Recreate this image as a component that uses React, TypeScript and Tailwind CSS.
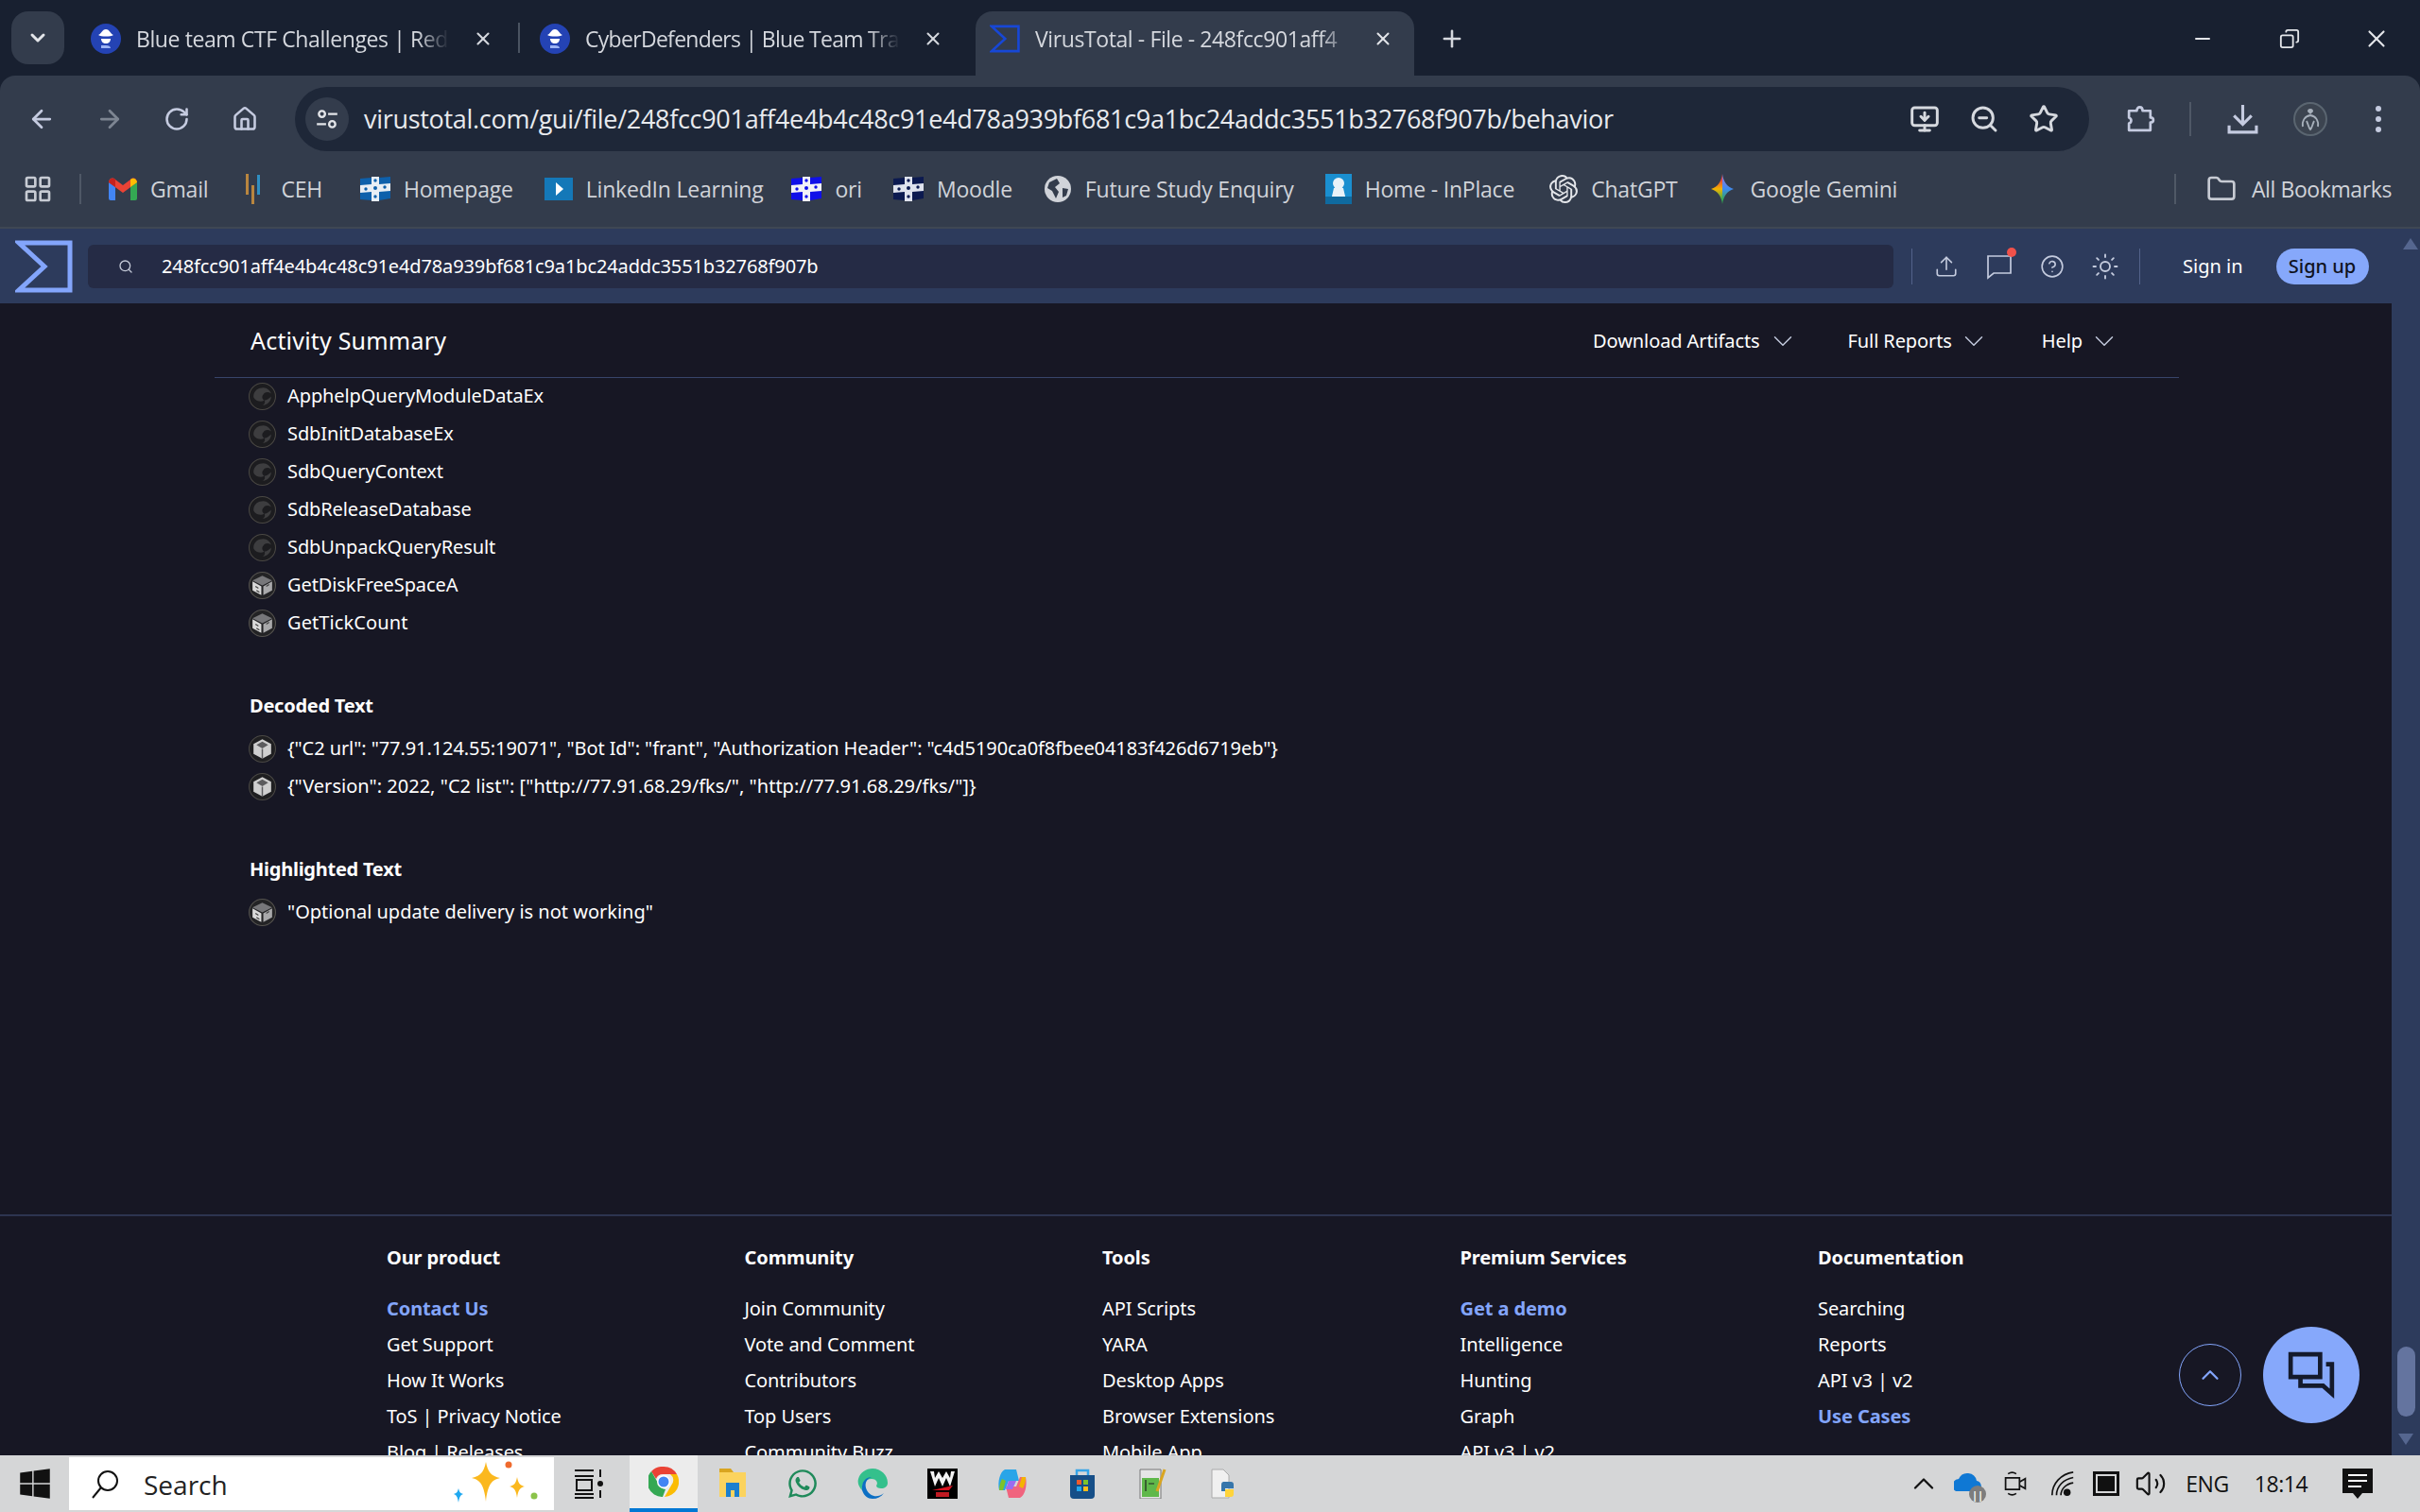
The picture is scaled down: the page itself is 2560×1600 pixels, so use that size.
import {
  ArrowLeft,
  ArrowRight,
  ChevronDown,
  ChevronUp,
  CircleHelp,
  Copy,
  Folder,
  House,
  LayoutGrid,
  Minus,
  MonitorDown,
  Plus,
  RotateCw,
  Search,
  Star,
  Sun,
  Upload,
  Volume2,
  X,
  ZoomOut,
} from "lucide-react";
import { FaWhatsapp, FaWindows } from "react-icons/fa";
import { SiOpenai } from "react-icons/si";

const UI = "font-['Open_Sans',sans-serif]";
const SITE = "font-['Noto_Sans',sans-serif]";

function HatIcon() {
  return (
    <svg viewBox="0 0 32 32" className="w-8 h-8 shrink-0">
      <circle cx="16" cy="16" r="16" fill="#2443b4" />
      <path d="M8 12c3-1 4-6 8-6s5 5 8 6c-3 2-13 2-16 0z" fill="#fff" />
      <path d="M11 16h10c0 3-2 5-5 5s-5-2-5-5z" fill="#fff" />
      <path d="M11 23h5c3 0 5 1 5 3h-10z" fill="#9db4f5" />
    </svg>
  );
}

function SigmaIcon({ stroke, className }: { stroke: string; className: string }) {
  return (
    <svg viewBox="0 0 61 56" className={className}>
      <polygon points="4,3 58,3 58,53 4,53 31,28" fill="none" stroke={stroke} strokeWidth="5" />
    </svg>
  );
}

function Tab({ title, active, icon, textW }: { title: string; active?: boolean; icon: React.ReactNode; textW: string }) {
  return (
    <div className={`flex items-center h-[68px] pb-[10px] pl-[15px] ${active ? "bg-[#333c4c] rounded-tl-[18px]" : ""}`}>
      {icon}
      <span
        className={`ml-[16px] overflow-hidden whitespace-nowrap text-[23px] text-[#d5d8de] [mask-image:linear-gradient(to_right,black_90%,transparent)] ${textW}`}
      >
        {title}
      </span>
    </div>
  );
}

function TabStrip() {
  return (
    <div className={`h-[80px] shrink-0 flex items-end bg-[#182030] ${UI}`}>
      <div className="w-[12px]" />
      <div className="self-start mt-[12px] w-[56px] h-[56px] rounded-[18px] bg-[#333c4c] flex items-center justify-center text-[#e3e5e9]">
        <ChevronDown size={24} strokeWidth={3} />
      </div>
      <div className="w-[13px]" />
      <Tab title="Blue team CTF Challenges | Red" icon={<HatIcon />} textW="w-[331px] tracking-[-0.4px]" />
      <div className="w-[72px] h-[68px] pb-[10px] flex items-center justify-center text-[#d5d8de]">
        <X size={22} strokeWidth={2.2} />
      </div>
      <div className="self-start ml-[1px] mt-[24px] h-[32px] w-[2px] bg-[#4a5361]" />
      <div className="w-[6px]" />
      <Tab title="CyberDefenders | Blue Team Tra" icon={<HatIcon />} textW="w-[333px] tracking-[-0.7px]" />
      <div className="w-[70px] h-[68px] pb-[10px] flex items-center justify-center text-[#d5d8de]">
        <X size={22} strokeWidth={2.2} />
      </div>
      <div className="w-[10px]" />
      <Tab
        title="VirusTotal - File - 248fcc901aff4"
        active
        icon={<SigmaIcon stroke="#1747d6" className="w-[32px] h-[32px] shrink-0" />}
        textW="w-[335px] tracking-[-0.4px]"
      />
      <div className="w-[66px] h-[68px] pb-[10px] bg-[#333c4c] rounded-tr-[18px] flex items-center justify-center text-[#e3e5e9]">
        <X size={22} strokeWidth={2.2} />
      </div>
      <div className="w-[40px] h-[68px] pb-[10px] ml-[20px] flex items-center justify-center text-[#d5d8de]">
        <Plus size={28} strokeWidth={2.2} />
      </div>
      <div className="ml-auto self-stretch flex items-center text-[#e3e5e9] pt-[2px]">
        <div className="w-[92px] flex justify-center">
          <Minus size={24} strokeWidth={2} />
        </div>
        <div className="w-[92px] flex justify-center">
          <Copy size={22} strokeWidth={2} className="-scale-x-100" />
        </div>
        <div className="w-[92px] flex justify-center">
          <X size={30} strokeWidth={1.7} />
        </div>
      </div>
    </div>
  );
}

function Toolbar() {
  return (
    <div className={`h-[80px] shrink-0 bg-[#182030] ${UI}`}>
      <div className="h-full bg-[#333c4c] rounded-t-[16px] flex items-end text-[#c5cbe0]">
        <div className="h-[68px] flex items-center">
          <div className="w-[8px]" />
          <div className="w-[72px] flex justify-center">
            <ArrowLeft size={30} strokeWidth={2.2} />
          </div>
          <div className="w-[71px] flex justify-center text-[#7d8592]">
            <ArrowRight size={30} strokeWidth={2.2} />
          </div>
          <div className="w-[72px] flex justify-center">
            <RotateCw size={28} strokeWidth={2.2} />
          </div>
          <div className="w-[72px] flex justify-center">
            <House size={28} strokeWidth={2.2} />
          </div>
          <div className="w-[17px]" />
        </div>
        <div className="w-[1898px] h-[68px] rounded-full bg-[#1e2738] flex items-center">
          <div className="ml-[11px] w-[46px] h-[46px] rounded-full bg-[#333c4c] flex items-center justify-center">
            <svg viewBox="0 0 24 24" className="w-[26px] h-[26px]" fill="none" stroke="#e3e5e9" strokeWidth="2.2">
              <circle cx="7" cy="7" r="3" />
              <path d="M13 7h9M2 17h9" />
              <circle cx="17" cy="17" r="3" />
            </svg>
          </div>
          <span className="ml-[16px] text-[27px] tracking-[-0.3px] text-[#e8eaee] whitespace-nowrap">
            virustotal.com/gui/file/248fcc901aff4e4b4c48c91e4d78a939bf681c9a1bc24addc3551b32768f907b/behavior
          </span>
          <div className="ml-auto flex items-center gap-[31px] pr-[32px] text-[#d6d9df]">
            <MonitorDown size={32} strokeWidth={2.2} />
            <ZoomOut size={32} strokeWidth={2.2} />
            <Star size={32} strokeWidth={2.2} />
          </div>
        </div>
        <div className="h-[68px] flex items-center ml-[5px]">
          <div className="w-[101px] flex justify-center pl-[4px] pr-[7px]">
            <svg viewBox="0 0 32 32" className="w-[33px] h-[33px]" fill="none" stroke="currentColor" strokeWidth="2.6" strokeLinejoin="round">
              <path d="M4 7h8c0-5 6-5 6 0h8v7c4 0 4 5 0 5v8H4v-7c3-1 3-5 0-6z" />
            </svg>
          </div>
          <div className="h-[36px] w-[2px] bg-[#4f5866]" />
          <div className="w-[108px] flex justify-center">
            <svg viewBox="0 0 32 32" className="w-[33px] h-[33px]" fill="none" stroke="currentColor" strokeWidth="3">
              <path d="M16 1v19M7 12l9 9 9-9M2 22v7h28v-7" />
            </svg>
          </div>
          <svg viewBox="0 0 36 36" className="w-[36px] h-[36px]">
            <circle cx="18" cy="18" r="17" fill="#3c4450" stroke="#5a6570" strokeWidth="2" />
            <path d="M18 7c-2 0-3 1-3 3l3 3 3-3c0-2-1-3-3-3z" fill="#a7b0bb" />
            <path d="M18 14c-6 1-9 6-8 12M18 14c6 1 9 6 8 12M14 20c2 4 2 7 4 9 2-2 2-5 4-9" fill="none" stroke="#a7b0bb" strokeWidth="1.8" />
          </svg>
          <div className="w-[88px] pl-[20px] flex flex-col items-center gap-[5px]">
            <div className="w-[6px] h-[6px] rounded-full bg-[#c5cbe0]" />
            <div className="w-[6px] h-[6px] rounded-full bg-[#c5cbe0]" />
            <div className="w-[6px] h-[6px] rounded-full bg-[#c5cbe0]" />
          </div>
        </div>
      </div>
    </div>
  );
}

function FlagIcon({ bg, dot }: { bg: string; dot: string }) {
  return (
    <svg viewBox="0 0 32 28" className="w-[32px] h-[28px] shrink-0">
      <path d="M0 3l12-1v24L0 25zM20 2l12-1v23l-12 2z" fill={bg} />
      <path d="M12 1h8v26h-8z" fill={bg} />
      <path d="M0 10l12-1V1h8v8l12-1v8l-12 1v10h-8V17L0 18z" fill={dot} />
      <circle cx="16" cy="5" r="1.7" fill={bg} />
      <circle cx="16" cy="13" r="2" fill={bg} />
      <circle cx="16" cy="22" r="1.7" fill={bg} />
      <circle cx="6" cy="14" r="1.7" fill={bg} />
      <circle cx="26" cy="12" r="1.7" fill={bg} />
    </svg>
  );
}

function Bookmark({ icon, label, className = "" }: { icon: React.ReactNode; label: string; className?: string }) {
  return (
    <div className={`flex items-center gap-[14px] ${className}`}>
      {icon}
      <span className="text-[23px] tracking-[-0.2px] text-[#d0d3d9] whitespace-nowrap">{label}</span>
    </div>
  );
}

function BookmarksBar() {
  return (
    <div className={`h-[82px] shrink-0 bg-[#333c4c] border-b-2 border-[#3f4754] flex items-center ${UI}`}>
      <div className="w-[84px] flex justify-center pr-[4px] text-[#c7cbd3]">
        <LayoutGrid size={32} strokeWidth={2} />
      </div>
      <div className="h-[32px] w-[2px] bg-[#4f5866]" />
      <div className="ml-[29px] flex items-center gap-[33px]">
        <Bookmark
          label="Gmail"
          icon={
            <svg viewBox="0 0 30 24" className="w-[30px] h-[24px]">
              <path d="M0 5c0-4 4-6 7-3l8 6 8-6c3-3 7-1 7 3L15 16z" fill="#ea4335" />
              <path d="M0 5l7 5v14H2a2 2 0 0 1-2-2z" fill="#4285f4" />
              <path d="M30 5l-7 5v14h5a2 2 0 0 0 2-2z" fill="#34a853" />
              <path d="M23 2v8l7-5c0-3-4-6-7-3z" fill="#fbbc04" />
              <path d="M7 2v8L0 5c0-3 4-6 7-3z" fill="#c5221f" />
            </svg>
          }
        />
        <Bookmark
          label="CEH"
          icon={
            <svg viewBox="0 0 30 32" className="w-[30px] h-[32px]">
              <path d="M7 0h3v22H7zM13 12h3v20h-3z" fill="#b9863f" />
              <path d="M19 1h3v21h-3z" fill="#2f8fc2" />
            </svg>
          }
        />
        <Bookmark label="Homepage" className="ml-[7px]" icon={<FlagIcon bg="#0e60ab" dot="#e8eef5" />} />
        <Bookmark
          label="LinkedIn Learning"
          icon={
            <svg viewBox="0 0 30 28" className="w-[30px] h-[28px]">
              <path d="M0 2h30v24H0z" fill="#1478b8" />
              <path d="M12 7l8 7-8 7z" fill="#fff" />
            </svg>
          }
        />
        <Bookmark label="ori" className="-ml-[3px]" icon={<FlagIcon bg="#1010e8" dot="#f2f2f8" />} />
        <Bookmark label="Moodle" icon={<FlagIcon bg="#0c1a50" dot="#dfe3ee" />} />
        <Bookmark
          label="Future Study Enquiry"
          icon={
            <svg viewBox="0 0 30 30" className="w-[30px] h-[30px]">
              <circle cx="15" cy="15" r="14" fill="#d0d3d9" />
              <path d="M6 8l8-4 3 5-5 4 4 5-3 7-4-8-5-3zM20 14l6 1-2 7-4 2z" fill="#333c4c" />
            </svg>
          }
        />
        <Bookmark
          label="Home - InPlace"
          icon={
            <svg viewBox="0 0 28 32" className="w-[28px] h-[32px]">
              <path d="M0 0h28v32H0z" fill="#1a8fd0" />
              <circle cx="14" cy="10" r="6" fill="#e8f2f8" />
              <path d="M9 15h10l3 13H6z" fill="#e8f2f8" />
              <path d="M0 24h28v8H0z" fill="#0f6a9f" />
            </svg>
          }
        />
        <Bookmark label="ChatGPT" className="ml-[4px]" icon={<SiOpenai size={30} className="text-[#e3e5e9]" />} />
        <Bookmark
          label="Google Gemini"
          className="-ml-[2px]"
          icon={
            <svg viewBox="0 0 32 32" className="w-[32px] h-[32px]">
              <defs>
                <linearGradient id="gemL" x1="0" y1="0" x2="0" y2="1">
                  <stop offset="0.2" stopColor="#e8453c" />
                  <stop offset="0.5" stopColor="#f4b400" />
                  <stop offset="0.85" stopColor="#34a853" />
                </linearGradient>
                <linearGradient id="gemR" x1="0" y1="0" x2="0" y2="1">
                  <stop offset="0.2" stopColor="#7a7fe0" />
                  <stop offset="0.5" stopColor="#3f8af0" />
                  <stop offset="0.85" stopColor="#34a853" />
                </linearGradient>
              </defs>
              <path d="M16 0c-1 8-5 14-12 16 7 2 11 8 12 16z" fill="url(#gemL)" />
              <path d="M16 0c1 8 5 14 12 16-7 2-11 8-12 16z" fill="url(#gemR)" />
            </svg>
          }
        />
      </div>
      <div className="ml-auto flex items-center">
        <div className="h-[32px] w-[2px] bg-[#4f5866]" />
        <div className="ml-[32px] flex items-center gap-[16px] pr-[30px]">
          <Folder size={32} strokeWidth={2} className="text-[#c7cbd3]" />
          <span className="text-[23px] tracking-[-0.4px] text-[#d0d3d9] whitespace-nowrap">All Bookmarks</span>
        </div>
      </div>
    </div>
  );
}

function VtHeader() {
  return (
    <div className="h-[79px] shrink-0 bg-[#2d3b5c] flex items-center">
      <SigmaIcon stroke="#83a5fb" className="ml-[16px] w-[61px] h-[56px] shrink-0" />
      <div className="ml-[16px] w-[1910px] h-[46px] rounded-[6px] bg-[#252b45] flex items-center">
        <Search size={16} className="ml-[32px] text-[#c5cad8]" />
        <span className="ml-[30px] text-[20px] tracking-[-0.12px] text-white whitespace-nowrap">
          248fcc901aff4e4b4c48c91e4d78a939bf681c9a1bc24addc3551b32768f907b
        </span>
      </div>
      <div className="ml-[19px] h-[38px] w-px bg-[#53628a]" />
      <div className="flex items-center text-[#c4cbde]">
        <div className="w-[72px] flex justify-center">
          <Upload size={26} strokeWidth={1.5} />
        </div>
        <div className="relative w-[40px] flex justify-center">
          <svg viewBox="0 0 28 28" className="w-[28px] h-[28px]" fill="none" stroke="currentColor" strokeWidth="1.7">
            <path d="M2 3h24v18H8l-6 5z" />
          </svg>
          <span className="absolute -top-[6px] right-[2px] w-[10px] h-[10px] rounded-full bg-[#f1514a]" />
        </div>
        <div className="w-[72px] flex justify-center">
          <CircleHelp size={26} strokeWidth={1.5} />
        </div>
        <div className="w-[40px] flex justify-center">
          <Sun size={30} strokeWidth={1.5} />
        </div>
      </div>
      <div className="ml-[16px] h-[38px] w-px bg-[#53628a]" />
      <span className="ml-[45px] text-[20px] text-white">Sign in</span>
      <span className="ml-[35px] w-[98px] h-[38px] rounded-[19px] bg-[#86a8fb] text-[#10131f] text-[20px] font-medium flex items-center justify-center">
        Sign up
      </span>
    </div>
  );
}

function SwirlIcon() {
  return (
    <svg viewBox="0 0 28 28" className="w-[29px] h-[29px] shrink-0">
      <circle cx="14" cy="14" r="13.5" fill="#1c1c1f" stroke="#4a4844" />
      <path d="M5 14c0-6 5-9 10-9 4 0 7 3 8 6-3-2-6-2-8 1-2 2-1 5 1 6-5 3-11-1-11-4z" fill="#3d3d3f" />
      <path d="M23 14c0 5-4 9-9 9 3-1 3-4 2-5 3 0 5-2 7-4z" fill="#3d3d3f" />
    </svg>
  );
}

function CubeIcon() {
  return (
    <svg viewBox="0 0 28 28" className="w-[29px] h-[29px] shrink-0">
      <circle cx="14" cy="14" r="13.5" fill="#232325" stroke="#55534f" />
      <path d="M14 4l10 5-10 5L4 9z" fill="#77777a" />
      <path d="M4 10l9 5v9l-9-5z" fill="#d9d9d9" />
      <path d="M15 15l9-5v9l-9 5z" fill="#a9a9ab" />
      <path d="M7 15l3 2M8 19l3 2M18 15l3-2" stroke="#444" strokeWidth="1.2" />
    </svg>
  );
}

function BoxIcon() {
  return (
    <svg viewBox="0 0 28 28" className="w-[29px] h-[29px] shrink-0">
      <circle cx="14" cy="14" r="13.5" fill="#1f1f21" stroke="#4a4845" />
      <path d="M14 4l9 5v10l-9 5-9-5V9z" fill="#cfcfcf" />
      <path d="M14 6.5l6 3.5-6 3.5L8 10z" fill="#5c5c5e" />
      <path d="M14 14v10" stroke="#5c5c5e" strokeWidth="1.4" />
    </svg>
  );
}

function ApiRow({ icon, text, track = "tracking-[-0.1px]" }: { icon: React.ReactNode; text: string; track?: string }) {
  return (
    <div className={`h-[40px] flex items-center gap-[12px] text-[20px] text-white whitespace-nowrap ${track}`}>
      {icon}
      {text}
    </div>
  );
}

function Activity() {
  const swirl = ["ApphelpQueryModuleDataEx", "SdbInitDatabaseEx", "SdbQueryContext", "SdbReleaseDatabase", "SdbUnpackQueryResult"];
  return (
    <div>
      <div className="ml-[227px] mr-[225px] h-[79px] pt-[2px] border-b border-[#38456a] flex items-center pl-[38px] text-white">
        <span className="text-[25px] tracking-[0.2px]">Activity Summary</span>
        <div className="ml-auto flex items-center text-[20px] tracking-[-0.1px] pr-[62px]">
          <span>Download Artifacts</span>
          <ChevronDown size={34} strokeWidth={1} className="ml-[7px] text-[#c4cbde]" />
          <span className="ml-[52px]">Full Reports</span>
          <ChevronDown size={34} strokeWidth={1} className="ml-[6px] text-[#c4cbde]" />
          <span className="ml-[55px]">Help</span>
          <ChevronDown size={34} strokeWidth={1} className="ml-[6px] text-[#c4cbde]" />
        </div>
      </div>
      <div className="-mt-[1px] pl-[263px]">
        {swirl.map((s) => (
          <ApiRow key={s} icon={<SwirlIcon />} text={s} />
        ))}
        <ApiRow icon={<CubeIcon />} text="GetDiskFreeSpaceA" />
        <ApiRow icon={<CubeIcon />} track="tracking-[0.1px]" text="GetTickCount" />
        <h3 className="mt-[54px] h-[28px] ml-[1px] flex items-center font-bold text-[20px] tracking-[-0.25px] text-white">Decoded Text</h3>
        <div className="mt-[11px]">
          <ApiRow
            icon={<BoxIcon />}
            track="tracking-[-0.08px]"
            text={'{"C2 url": "77.91.124.55:19071", "Bot Id": "frant", "Authorization Header": "c4d5190ca0f8fbee04183f426d6719eb"}'}
          />
          <ApiRow
            icon={<BoxIcon />}
            track="tracking-[0.02px]"
            text={'{"Version": 2022, "C2 list": ["http://77.91.68.29/fks/", "http://77.91.68.29/fks/"]}'}
          />
        </div>
        <h3 className="mt-[54px] h-[28px] ml-[1px] flex items-center font-bold text-[20px] tracking-[-0.25px] text-white">Highlighted Text</h3>
        <div className="mt-[11px]">
          <ApiRow icon={<CubeIcon />} track="tracking-[0px]" text={'"Optional update delivery is not working"'} />
        </div>
      </div>
    </div>
  );
}

const footerCols: { title: string; links: { label: string; blue?: boolean }[] }[] = [
  {
    title: "Our product",
    links: [{ label: "Contact Us", blue: true }, { label: "Get Support" }, { label: "How It Works" }, { label: "ToS | Privacy Notice" }, { label: "Blog | Releases" }],
  },
  {
    title: "Community",
    links: [{ label: "Join Community" }, { label: "Vote and Comment" }, { label: "Contributors" }, { label: "Top Users" }, { label: "Community Buzz" }],
  },
  {
    title: "Tools",
    links: [{ label: "API Scripts" }, { label: "YARA" }, { label: "Desktop Apps" }, { label: "Browser Extensions" }, { label: "Mobile App" }],
  },
  {
    title: "Premium Services",
    links: [{ label: "Get a demo", blue: true }, { label: "Intelligence" }, { label: "Hunting" }, { label: "Graph" }, { label: "API v3 | v2" }],
  },
  {
    title: "Documentation",
    links: [{ label: "Searching" }, { label: "Reports" }, { label: "API v3 | v2" }, { label: "Use Cases", blue: true }],
  },
];

function Footer() {
  return (
    <div className="mt-[300px] border-t-2 border-[#2d3450] pt-[30px] pl-[409px] grid grid-cols-[378.5px_378.5px_378.5px_378.5px_378.5px]">
      {footerCols.map((col) => (
        <div key={col.title}>
          <div className="h-[28px] flex items-center font-bold text-[20px] tracking-[-0.1px] text-white">{col.title}</div>
          <div className="mt-[21px]">
            {col.links.map((l) => (
              <div
                key={l.label}
                className={`h-[38px] flex items-center text-[20px] tracking-[-0.1px] ${l.blue ? "font-bold text-[#83a5fb]" : "text-white"}`}
              >
                {l.label}
              </div>
            ))}
          </div>
        </div>
      ))}
    </div>
  );
}

function Scrollbar() {
  return (
    <div className="w-[30px] shrink-0 bg-[#2d3b5c] flex flex-col items-center relative">
      <div className="mt-[10px] ml-[10px] w-0 h-0 border-x-[8px] border-x-transparent border-b-[12px] border-b-[#55668f]" />
      <div className="absolute top-[1183px] left-[6px] w-[19px] h-[74px] rounded-[10px] bg-[#64749f]" />
      <div className="absolute top-[1275px] left-[7px] w-0 h-0 border-x-[8px] border-x-transparent border-t-[12px] border-t-[#55668f]" />
    </div>
  );
}

function TrayBox({ w, children }: { w: string; children: React.ReactNode }) {
  return <div className={`${w} flex items-center justify-center`}>{children}</div>;
}

function Taskbar() {
  return (
    <div className={`h-[60px] shrink-0 bg-[#d5d6d7] flex items-center text-[#111] ${UI}`}>
      <div className="w-[73px] flex justify-center">
        <FaWindows size={36} />
      </div>
      <div className="w-[513px] h-[56px] bg-white flex items-center relative">
        <svg viewBox="0 0 32 32" className="ml-[22px] w-[32px] h-[32px]" fill="none" stroke="#111" strokeWidth="2">
          <circle cx="19" cy="13" r="10" />
          <path d="M12 20L3 31" />
        </svg>
        <span className="ml-[25px] pt-[2px] text-[28px] text-[#222]">Search</span>
        <svg viewBox="0 0 96 50" className="absolute right-[12px] top-[3px] w-[96px] h-[50px]">
          <path d="M36 2c2 11 6 15 15 17-9 2-13 7-15 25-2-18-6-23-15-25 9-2 13-6 15-17z" fill="#fbb81e" />
          <path d="M69 18c1 6 3 9 8 10-5 1-7 4-8 12-1-8-3-11-8-12 5-1 7-4 8-10z" fill="#fbb81e" />
          <circle cx="60" cy="5" r="3.5" fill="#ef6a2d" />
          <circle cx="87" cy="38" r="3.5" fill="#8bc34a" />
          <path d="M7 30c1 4 2 5 5 6-3 1-4 3-5 9-1-6-2-8-5-9 3-1 4-2 5-6z" fill="#1fa8f0" />
        </svg>
      </div>
      <div className="w-[80px] flex justify-center pr-[6px]">
        <svg viewBox="0 0 32 32" className="w-[32px] h-[32px]" fill="none" stroke="#111" strokeWidth="2">
          <path d="M1 2h20M1 8h20M3 12h16v11H3zM1 27h20M1 31h20M28 1v8M28 23v8" />
          <circle cx="28" cy="16" r="3" fill="#111" stroke="none" />
        </svg>
      </div>
      <div className="w-[72px] h-[60px] bg-[#ececec] border-b-4 border-[#0078d4] flex items-center justify-center">
        <svg viewBox="0 0 32 32" className="w-[32px] h-[32px]">
          <path d="M16 0a16 16 0 0 1 14 8H16a8 8 0 0 0-8 5L3 5a16 16 0 0 1 13-5z" fill="#ea4335" />
          <path d="M30 8a16 16 0 0 1-13 24l7-12a8 8 0 0 0-1-12z" fill="#fbbc04" />
          <path d="M3 5l8 14a8 8 0 0 0 7 5l-3 8A16 16 0 0 1 3 5z" fill="#34a853" />
          <circle cx="16" cy="16" r="7" fill="#fff" />
          <circle cx="16" cy="16" r="5.5" fill="#4285f4" />
        </svg>
      </div>
      <TrayBox w="w-[74px]">
        <svg viewBox="0 0 28 32" className="w-[28px] h-[32px]">
          <path d="M0 0h12l3 4H0z" fill="#d9a520" />
          <path d="M0 4h28v26H0z" fill="#fbd35e" />
          <path d="M7 15h14v15h-5v-7h-4v7H7z" fill="#1b7fcf" />
        </svg>
      </TrayBox>
      <TrayBox w="w-[74px]">
        <FaWhatsapp size={34} className="text-[#1f8a5a]" />
      </TrayBox>
      <TrayBox w="w-[74px]">
        <svg viewBox="0 0 32 32" className="w-[32px] h-[32px]">
          <path d="M16 0c9 0 16 7 16 15 0 4-3 6-7 6-3 0-5-1-5-3 2-2 1-7-5-7-7 0-11 6-10 12C1 19 0 14 1 11 3 4 9 0 16 0z" fill="#34c08c" />
          <path d="M5 23C4 14 9 9 15 9c-6 2-8 8-5 14 3 6 11 9 18 3-3 4-7 6-12 6-5 0-9-3-11-9z" fill="#0c6fc4" />
        </svg>
      </TrayBox>
      <TrayBox w="w-[74px]">
        <svg viewBox="0 0 32 32" className="w-[32px] h-[34px]">
          <path d="M0 0h32v32H0z" fill="#000" />
          <path d="M3 3l5 16 4-9 4 9 4-9 4 9 5-16-4 0-1 7-4-7-4 7-4-7-4 7-1-7z" fill="#f4f4f4" />
          <path d="M5 23l22-5-4 5z" fill="#d8121f" />
          <path d="M9 25h14v5H9z" fill="#c01a22" />
        </svg>
      </TrayBox>
      <TrayBox w="w-[74px]">
        <svg viewBox="0 0 32 32" className="w-[32px] h-[32px]">
          <path d="M8 1h12l3 12H12l-4 10H2C0 14 3 3 8 1z" fill="#29a5e8" />
          <path d="M24 31H12L9 19h11l4-10h6c2 9-1 20-6 22z" fill="#f0647e" />
          <path d="M12 13h8l-4 9H9z" fill="#9b6cf0" />
          <path d="M2 23c0-5 1-8 3-12l4 2-3 10z" fill="#7dc32b" />
          <path d="M30 9c0 5-1 8-3 12l-4-2 3-10z" fill="#f4b400" />
        </svg>
      </TrayBox>
      <TrayBox w="w-[74px]">
        <svg viewBox="0 0 30 32" className="w-[30px] h-[32px]">
          <path d="M2 7h26v21a4 4 0 0 1-4 4H6a4 4 0 0 1-4-4z" fill="#164f88" />
          <path d="M9 7V2h12v5" fill="none" stroke="#36a4e8" strokeWidth="2.5" />
          <path d="M9 12h5v5H9z" fill="#ef5a2d" />
          <path d="M16 12h5v5h-5z" fill="#7dc32b" />
          <path d="M9 19h5v5H9z" fill="#22a8ee" />
          <path d="M16 19h5v5h-5z" fill="#fbbc1a" />
        </svg>
      </TrayBox>
      <TrayBox w="w-[74px]">
        <svg viewBox="0 0 30 32" className="w-[30px] h-[32px]">
          <path d="M2 1h22v31H2z" fill="#e6e6e6" stroke="#777" />
          <path d="M4 10h18v20H4z" fill="#5fb84a" />
          <path d="M8 12v12M11 16h6" stroke="#222" strokeWidth="1.2" />
          <path d="M28 1L20 24" stroke="#d9a520" strokeWidth="3" />
        </svg>
      </TrayBox>
      <TrayBox w="w-[74px]">
        <svg viewBox="0 0 30 32" className="w-[30px] h-[32px] ml-[4px]">
          <path d="M2 1h12l6 6v24H2z" fill="#f0f0f0" stroke="#aaa" />
          <path d="M14 14h8a3 3 0 0 1 3 3v4h-9v3h-4v-7a3 3 0 0 1 2-3z" fill="#3776ab" />
          <path d="M16 22h9v5a3 3 0 0 1-3 3h-6z" fill="#ffd43b" />
        </svg>
      </TrayBox>
      <div className="ml-auto flex items-center h-full">
        <TrayBox w="w-[50px]">
          <ChevronUp size={36} strokeWidth={1.5} />
        </TrayBox>
        <TrayBox w="w-[46px]">
          <div className="relative w-[32px] h-[32px]">
            <svg viewBox="0 0 32 32" className="w-[32px] h-[32px]">
              <path d="M2 24a7 7 0 0 1 3-13 10 10 0 0 1 19 2 6 6 0 0 1 2 11z" fill="#0f78d4" />
            </svg>
            <span className="absolute -bottom-[4px] -right-[2px] w-[18px] h-[18px] rounded-full bg-[#7d7d7d] flex items-center justify-center text-[11px] text-white font-bold leading-none">
              ||
            </span>
          </div>
        </TrayBox>
        <TrayBox w="w-[52px]">
          <svg viewBox="0 0 30 32" className="w-[26px] h-[30px]" fill="none" stroke="#111" strokeWidth="2">
            <path d="M3 9h17v14H3zM20 14l7-4v12l-7-4M6 4c3-2 7-2 10 0M6 28c3 2 7 2 10 0" />
          </svg>
        </TrayBox>
        <TrayBox w="w-[48px]">
          <svg viewBox="0 0 30 30" className="w-[28px] h-[30px]" fill="none" stroke="#111" strokeWidth="1.8">
            <path d="M3 28C3 15 13 4 27 2M8 28c0-10 8-18 19-20M13 28c0-7 6-13 14-14" />
            <circle cx="20" cy="25" r="4" fill="#111" stroke="none" />
          </svg>
        </TrayBox>
        <TrayBox w="w-[44px]">
          <div className="w-[28px] h-[26px] border-[3px] border-[#111] p-[2px]">
            <div className="w-full h-full bg-[#111]" />
          </div>
        </TrayBox>
        <TrayBox w="w-[50px]">
          <Volume2 size={34} strokeWidth={1.5} />
        </TrayBox>
        <TrayBox w="w-[70px]">
          <span className="text-[23px] tracking-[-0.4px]">ENG</span>
        </TrayBox>
        <TrayBox w="w-[86px]">
          <span className="text-[23px] tracking-[-0.4px]">18:14</span>
        </TrayBox>
        <TrayBox w="w-[76px]">
          <svg viewBox="0 0 32 32" className="w-[32px] h-[32px]">
            <path d="M0 0h32v26H21l-5 6-5-6H0z" fill="#111" />
            <path d="M6 7h20M6 13h20M6 19h14" stroke="#fff" strokeWidth="2" />
          </svg>
        </TrayBox>
        <div className="w-[28px]" />
      </div>
    </div>
  );
}

export default function App() {
  return (
    <div className={`w-[2560px] h-[1600px] flex flex-col overflow-hidden ${SITE}`}>
      <TabStrip />
      <Toolbar />
      <BookmarksBar />
      <div className="flex-1 min-h-0 flex relative bg-[#171724]">
        <div className="flex-1 min-w-0 flex flex-col overflow-hidden">
          <VtHeader />
          <Activity />
          <Footer />
        </div>
        <Scrollbar />
        <div className="absolute left-[2305px] top-[1180px] w-[66px] h-[66px] rounded-full border border-[#83a5fb] flex items-center justify-center text-[#83a5fb]">
          <ChevronUp size={30} strokeWidth={1.8} />
        </div>
        <div className="absolute left-[2394px] top-[1162px] w-[102px] h-[102px] rounded-full bg-[#86a8fb] flex items-center justify-center">
          <svg viewBox="0 0 50 50" className="w-[52px] h-[52px]" fill="none" stroke="#141a2c" strokeWidth="4.5">
            <path d="M4 4h30v23H4z" />
            <path d="M40 14h6v30l-9-8H14v-8" />
          </svg>
        </div>
      </div>
      <Taskbar />
    </div>
  );
}
